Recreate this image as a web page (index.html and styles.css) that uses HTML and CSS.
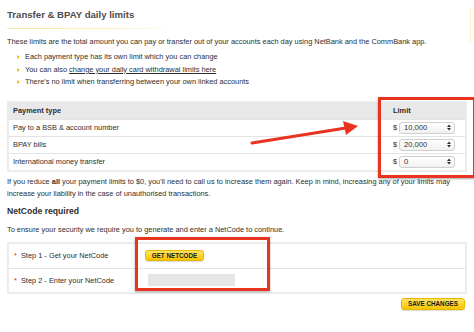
FILE: index.html
```html
<!DOCTYPE html>
<html>
<head>
<meta charset="utf-8">
<link rel="stylesheet" href="styles.css">
</head>
<body>
<div class="page">
  <h1 class="title">Transfer &amp; BPAY daily limits</h1>
  <div class="rule"></div>
  <p class="intro">These limits are the total amount you can pay or transfer out of your accounts each day using NetBank and the CommBank app.</p>
  <ul class="bullets">
    <li>Each payment type has its own limit which you can change</li>
    <li>You can also <a class="link" href="#">change your daily card withdrawal limits here</a></li>
    <li>There's no limit when transferring between your own linked accounts</li>
  </ul>

  <div class="limits">
    <div class="row head"><span>Payment type</span><span class="lim">Limit</span></div>
    <div class="row"><span>Pay to a BSB &amp; account number</span><span class="lim"><span class="cur">$</span><span class="sel">10,000<svg class="spin" width="4" height="7" viewBox="0 0 4 7"><path d="M0 3 L2 0.5 L4 3 Z M0 4 L2 6.5 L4 4 Z" fill="#333"/></svg></span></span></div>
    <div class="row"><span>BPAY bills</span><span class="lim"><span class="cur">$</span><span class="sel">20,000<svg class="spin" width="4" height="7" viewBox="0 0 4 7"><path d="M0 3 L2 0.5 L4 3 Z M0 4 L2 6.5 L4 4 Z" fill="#333"/></svg></span></span></div>
    <div class="row"><span>International money transfer</span><span class="lim"><span class="cur">$</span><span class="sel">0<svg class="spin" width="4" height="7" viewBox="0 0 4 7"><path d="M0 3 L2 0.5 L4 3 Z M0 4 L2 6.5 L4 4 Z" fill="#333"/></svg></span></span></div>
  </div>

  <p class="note"><span class="line">If you reduce <span class="strong">all</span> your payment limits to $0, you'll need to call us to increase them again. Keep in mind, increasing any of your limits may</span><span class="line">increase your liability in the case of unauthorised transactions.</span></p>

  <h2 class="sub">NetCode required</h2>
  <p class="ensure">To ensure your security we require you to generate and enter a NetCode to continue.</p>

  <div class="netcode">
    <div class="nrow"><span class="label"><i>*</i> Step 1 - Get your NetCode</span><span class="field"><button class="btn">GET NETCODE</button></span></div>
    <div class="nrow"><span class="label"><i>*</i> Step 2 - Enter your NetCode</span><span class="field"><span class="input"></span></span></div>
  </div>

  <div class="actions"><button class="btn save">SAVE CHANGES</button></div>

  <div class="edge"></div>
  <div class="redbox box1"></div>
  <div class="redbox box2"></div>
  <svg class="arrow" width="120" height="30" viewBox="0 0 120 30">
    <path d="M2 26 L96 11" stroke="#e8331f" stroke-width="3" stroke-linecap="round"/>
    <path d="M93 4 L108 9 L96 18 Z" fill="#e8331f"/>
  </svg>
</div>
</body>
</html>
```
FILE: styles.css
```css
* { box-sizing: border-box; }
html, body { margin: 0; padding: 0; background: #fff; }
body {
  font-family: "Liberation Sans", Arial, sans-serif;
  font-size: 7.4px;
  color: #2e2e2e;
}
.page {
  position: relative;
  width: 474px;
  height: 332px;
  padding: 9px 7px 0 7px;
  overflow: hidden;
}
.title {
  margin: 0;
  font-size: 9.6px;
  font-weight: bold;
  color: #4d4d4d;
  line-height: 12px;
}
.rule {
  margin-top: 7px;
  height: 1px;
  width: 170px;
  background: linear-gradient(to right, #f6e9a8 0%, #f8eebb 60%, rgba(255,255,255,0) 100%);
}
.intro {
  margin: 8px 0 0 0;
  line-height: 10px;
}
.bullets {
  list-style: none;
  margin: 4px 0 0 0;
  padding: 0 0 0 18px;
}
.bullets li {
  position: relative;
  line-height: 12.5px;
}
.bullets li::before {
  content: "";
  position: absolute;
  left: -8px;
  top: 4px;
  border-left: 3px solid #f3c400;
  border-top: 2.5px solid transparent;
  border-bottom: 2.5px solid transparent;
}
.link { color: #2e2e2e; text-decoration: underline; }

.limits {
  margin-top: 12px;
  width: 460px;
  border: 2px solid #ececec;
  background: #fff;
}
.row {
  display: grid;
  grid-template-columns: 1fr 72px;
  align-items: center;
  height: 17px;
  padding-left: 4px;
  border-top: 1px solid #e3e3e3;
}
.row.head {
  border-top: none;
  height: 16px;
  background: #e8e8e8;
  font-weight: bold;
}
.lim {
  display: flex;
  align-items: center;
}
.cur { width: 6px; }
.sel {
  display: flex;
  align-items: center;
  justify-content: space-between;
  width: 56px;
  height: 12px;
  padding: 0 3px 0 4px;
  border: 1px solid #cfcfcf;
  border-radius: 3px;
  background: linear-gradient(#ffffff, #f1f1f1);
  font-size: 7.6px;
}
.note {
  margin: 4px 0 0 0;
  line-height: 12px;
}
.note .line { display: block; white-space: nowrap; }
.strong { font-weight: bold; }
.sub {
  margin: 5px 0 0 0;
  font-size: 8.6px;
  font-weight: bold;
  line-height: 12px;
}
.ensure {
  margin: 8px 0 0 0;
  line-height: 10px;
}
.netcode {
  margin-top: 7px;
  width: 460px;
  border: 2px solid #ececec;
}
.nrow {
  display: grid;
  grid-template-columns: 136px 1fr;
  align-items: center;
  height: 24px;
}
.nrow + .nrow { border-top: 1px solid #e3e3e3; }
.label { padding-left: 5px; }
.label i { font-style: normal; color: #d22; margin-right: 2px; }
.btn {
  font-family: "Liberation Sans", Arial, sans-serif;
  font-weight: bold;
  font-size: 6.3px;
  color: #1a1a1a;
  border: 1px solid #e6b800;
  border-radius: 3px;
  background: linear-gradient(#ffe366, #f7c600);
  box-shadow: 0 1px 1px rgba(0,0,0,0.15);
  padding: 0;
  height: 11px;
  width: 59px;
  margin-left: 0;
  line-height: 9px;
}
.input {
  display: block;
  width: 87px;
  height: 12px;
  margin-left: 3px;
  background: #e6e6e6;
}
.actions {
  display: flex;
  justify-content: flex-end;
  width: 458px;
  margin-top: 4px;
}
.save { width: 64px; height: 12px; }

.edge {
  position: absolute;
  left: 470px;
  top: 8px;
  width: 1px;
  height: 34px;
  background: #fbf1c4;
}
.redbox {
  position: absolute;
  border: 3px solid #e8331f;
  box-shadow: 0 1px 2px rgba(0,0,0,0.35);
}
.box1 { left: 378px; top: 97px; width: 98px; height: 81px; }
.box2 { left: 135px; top: 237px; width: 135px; height: 54px; }
.arrow { position: absolute; left: 250px; top: 117px; }
```
